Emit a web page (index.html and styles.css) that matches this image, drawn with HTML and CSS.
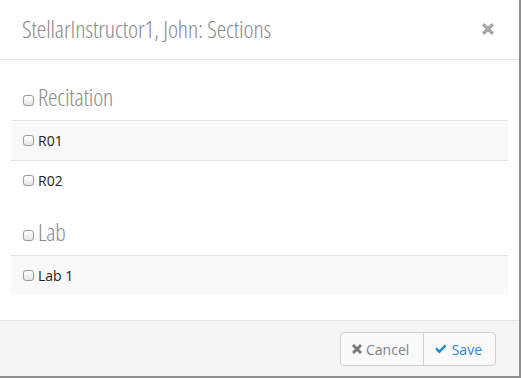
FILE: index.html
```html
<!DOCTYPE html>
<html>
<head>
<meta charset="utf-8">
<link rel="stylesheet" href="styles.css">
</head>
<body>
<div class="modal">
  <div class="modal-header">
    <h4 class="modal-title">StellarInstructor1, John: Sections</h4>
    <span class="close" aria-label="Close">
      <svg viewBox="0 0 10 10" width="12" height="12"><path d="M2 0 L5 3 L8 0 L10 2 L7 5 L10 8 L8 10 L5 7 L2 10 L0 8 L3 5 L0 2 Z" fill="#a6a6a6"/></svg>
    </span>
  </div>
  <div class="modal-body">
    <div class="group">
      <label class="group-head"><input type="checkbox" class="cb"><span>Recitation</span></label>
      <div class="row odd"><label><input type="checkbox" class="cb">R01</label></div>
      <div class="row"><label><input type="checkbox" class="cb">R02</label></div>
    </div>
    <div class="group">
      <label class="group-head"><input type="checkbox" class="cb"><span>Lab</span></label>
      <div class="row odd"><label><input type="checkbox" class="cb">Lab 1</label></div>
    </div>
  </div>
  <div class="modal-footer">
    <div class="btn-group">
      <button class="btn btn-cancel">
        <svg viewBox="0 0 10 10" width="10" height="10"><path d="M2 0 L5 3 L8 0 L10 2 L7 5 L10 8 L8 10 L5 7 L2 10 L0 8 L3 5 L0 2 Z" fill="#7a7a7a"/></svg>
        Cancel
      </button>
      <button class="btn btn-save">
        <svg viewBox="0 0 12 10" width="12" height="10"><path d="M0.2 5.3 L2 3.5 L4.4 5.9 L10 0.3 L11.8 2.1 L4.4 9.5 Z" fill="#1f8ad2"/></svg>
        Save
      </button>
    </div>
  </div>
</div>
</body>
</html>
```
FILE: styles.css
```css
html, body {
  margin: 0;
  padding: 0;
  background: #fff;
}
body {
  font-family: "Open Sans", "Liberation Sans", sans-serif;
  color: #333;
}
.modal {
  width: 519px;
  height: 376px;
  border-right: 2px solid #8e8e8e;
  border-bottom: 2px solid #8e8e8e;
  background: #fff;
  display: flex;
  flex-direction: column;
}
.modal-header {
  height: 59px;
  border-bottom: 1px solid #e5e5e5;
  display: flex;
  align-items: center;
  justify-content: space-between;
  padding: 0 25px 0 22px;
}
.modal-title {
  margin: 0;
  font-family: "Open Sans", sans-serif;
  font-stretch: 75%;
  font-weight: 300;
  font-size: 24px;
  color: #8a8a8a;
  letter-spacing: -0.1px;
  padding-bottom: 2px;
}
.close {
  display: flex;
  margin-top: -2px;
}
.modal-body {
  flex: 1;
  padding: 5px 11px 0 11px;
}
.group-head {
  height: 55px;
  box-sizing: border-box;
  display: flex;
  align-items: flex-end;
  padding: 0 0 9px 12px;
  font-stretch: 75%;
  font-weight: 300;
  font-size: 24px;
  line-height: 28px;
  letter-spacing: -0.2px;
  color: #8a8a8a;
}
.group-head .cb {
  margin: 0 4px 5px 0;
}
.row {
  height: 40px;
  box-sizing: border-box;
  border-top: 1px solid #e3e3e3;
  display: flex;
  align-items: center;
  padding-left: 12px;
  font-size: 14px;
  color: #222;
}
.row label {
  display: flex;
  align-items: center;
}
.row.odd {
  background: #f9f9f9;
}
.cb {
  appearance: none;
  -webkit-appearance: none;
  width: 11px;
  height: 11px;
  margin: 0 4px 0 0;
  border: 1px solid #9a9a9a;
  border-radius: 3px;
  background: linear-gradient(#ffffff, #e6e6e6);
  box-sizing: border-box;
  flex: none;
}
.modal-footer {
  height: 56px;
  border-top: 1px solid #e2e2e2;
  background: #f5f5f5;
  display: flex;
  justify-content: flex-end;
  align-items: flex-start;
  padding: 11px 23px 0 0;
  box-sizing: border-box;
}
.btn-group {
  display: flex;
  border: 1px solid #cfcfcf;
  border-radius: 4px;
  overflow: hidden;
  background: #fafafa;
}
.btn {
  height: 32px;
  border: none;
  background: transparent;
  font-family: "Open Sans", sans-serif;
  font-size: 14px;
  display: flex;
  align-items: center;
  gap: 4px;
  padding: 0 13px 0 11px;
  margin: 0;
}
.btn-cancel {
  color: #808080;
  border-right: 1px solid #cfcfcf;
  width: 83px;
}
.btn-save {
  color: #1f8ad2;
  width: 71px;
  gap: 5px;
}
```
